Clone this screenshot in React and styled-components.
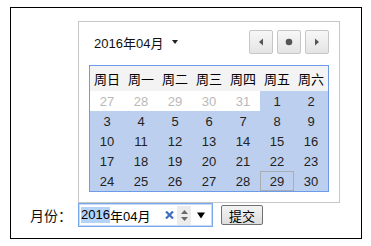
import styled, { createGlobalStyle } from "styled-components";

const FONT = `"Liberation Sans", Arial, "Noto Sans CJK SC", sans-serif`;

const WEEKDAYS = ["周日", "周一", "周二", "周三", "周四", "周五", "周六"];

// april 2016, starts on a friday
const buildDays = () => {
  const days = [];
  [27, 28, 29, 30, 31].forEach((d) => days.push({ d, inMonth: false }));
  for (let d = 1; d <= 30; d++) days.push({ d, inMonth: true, today: d === 29 });
  return days;
};

const App = () => {
  const days = buildDays();

  return (
    <>
      <GlobalStyle />
      <Frame>
        <Picker>
          <PickerHead>
            <MonthTitle>
              2016年04月
              <Caret />
            </MonthTitle>
            <NavGroup>
              <NavButton>
                <svg width="6" height="8" viewBox="0 0 6 8">
                  <path d="M5 0.5 L1 4 L5 7.5 Z" fill="#555" />
                </svg>
              </NavButton>
              <NavButton>
                <svg width="8" height="8" viewBox="0 0 8 8">
                  <circle cx="4" cy="4" r="3.3" fill="#555" />
                </svg>
              </NavButton>
              <NavButton>
                <svg width="6" height="8" viewBox="0 0 6 8">
                  <path d="M1 0.5 L5 4 L1 7.5 Z" fill="#555" />
                </svg>
              </NavButton>
            </NavGroup>
          </PickerHead>

          <Calendar>
            {WEEKDAYS.map((w) => (
              <HeadCell key={w}>{w}</HeadCell>
            ))}
            {days.map((day, i) => (
              <DayCell key={i} $inMonth={day.inMonth} $today={day.today}>
                {day.d}
              </DayCell>
            ))}
          </Calendar>
        </Picker>

        <FormRow>
          <Label>月份：</Label>
          <MonthInput>
            <Selected>2016</Selected>
            <span>年04月</span>
            <ClearX>
              <svg width="9" height="8" viewBox="0 0 9 8">
                <path d="M1 0.5 L8 7.5 M8 0.5 L1 7.5" stroke="#3f6fbf" strokeWidth="2.2" />
              </svg>
            </ClearX>
            <Spinner>
              <svg width="9" height="15" viewBox="0 0 9 15">
                <path d="M1 6 L4.5 2 L8 6 Z" fill="#6a6a6a" />
                <path d="M1 9 L4.5 13 L8 9 Z" fill="#6a6a6a" />
              </svg>
            </Spinner>
            <DropArrow>
              <svg width="8" height="7" viewBox="0 0 8 7">
                <path d="M0 0.5 L8 0.5 L4 6.5 Z" fill="#000" />
              </svg>
            </DropArrow>
          </MonthInput>
          <SubmitButton>提交</SubmitButton>
        </FormRow>
      </Frame>
    </>
  );
};

const GlobalStyle = createGlobalStyle`
  body {
    margin: 0;
    background: #fff;
    font-family: ${FONT};
    color: #000;
  }
`;

const Frame = styled.div`
  box-sizing: border-box;
  margin: 7px 0 0 10px;
  width: 352px;
  height: 232px;
  border: 1px solid #000;
  padding: 13px 0 0 19px;
`;

const Picker = styled.div`
  box-sizing: border-box;
  margin-left: 48px;
  width: 262px;
  border: 1px solid #c6c6c6;
  padding: 8px 10px 10px;
  background: #fff;
`;

const PickerHead = styled.div`
  display: flex;
  align-items: center;
  justify-content: space-between;
  height: 24px;
  margin-bottom: 11px;
`;

const MonthTitle = styled.div`
  display: flex;
  align-items: center;
  gap: 9px;
  padding-left: 5px;
  font-size: 13px;
  color: #111;
`;

const Caret = styled.span`
  width: 0;
  height: 0;
  border-top: 4px solid #222;
  border-left: 3.5px solid transparent;
  border-right: 3.5px solid transparent;
`;

const NavGroup = styled.div`
  display: flex;
  gap: 4px;
`;

const NavButton = styled.div`
  box-sizing: border-box;
  width: 24px;
  height: 24px;
  display: flex;
  align-items: center;
  justify-content: center;
  border: 1px solid #c6c6c6;
  border-radius: 2px;
  background: linear-gradient(#f7f7f7, #e4e4e4);
`;

const Calendar = styled.div`
  display: grid;
  grid-template-columns: repeat(7, 34px);
  border: 1px solid #6c9ce8;
`;

const HeadCell = styled.div`
  height: 25px;
  display: flex;
  align-items: center;
  justify-content: center;
  background: #f3f3f3;
  font-size: 13px;
  color: #000;
`;

const DayCell = styled.div`
  box-sizing: border-box;
  height: 20px;
  display: flex;
  align-items: center;
  justify-content: center;
  font-size: 13px;
  background: ${(p) => (p.$inMonth ? "#bdcfee" : "#fff")};
  color: ${(p) => (p.$inMonth ? "#222" : "#b9b9b9")};
  border: 1px solid ${(p) => (p.$today ? "#a9adb5" : "transparent")};
`;

const FormRow = styled.div`
  display: flex;
  align-items: center;
  height: 24px;
`;

const Label = styled.div`
  width: 48px;
  font-size: 14px;
  color: #111;
`;

const MonthInput = styled.div`
  box-sizing: border-box;
  width: 135px;
  height: 24px;
  display: flex;
  align-items: center;
  padding-left: 2px;
  border: 1px solid #79a6e8;
  box-shadow: inset 0 0 0 1px #c9dcf6;
  font-size: 13px;
  color: #000;
`;

const Selected = styled.span`
  background: #b5d3f8;
  line-height: 16px;
`;

const ClearX = styled.span`
  display: flex;
  margin-left: auto;
`;

const Spinner = styled.span`
  display: flex;
  align-items: center;
  justify-content: center;
  width: 14px;
  height: 19px;
  margin-left: 3px;
  background: #ececec;
`;

const DropArrow = styled.span`
  display: flex;
  margin: 0 7px 0 6px;
`;

const SubmitButton = styled.button`
  box-sizing: border-box;
  margin-left: 8px;
  width: 42px;
  height: 20px;
  padding: 0;
  border: 1px solid #707070;
  border-radius: 2px;
  background: linear-gradient(#f4f4f4, #dddddd);
  font-family: ${FONT};
  font-size: 13px;
  color: #000;
`;

export default App;
